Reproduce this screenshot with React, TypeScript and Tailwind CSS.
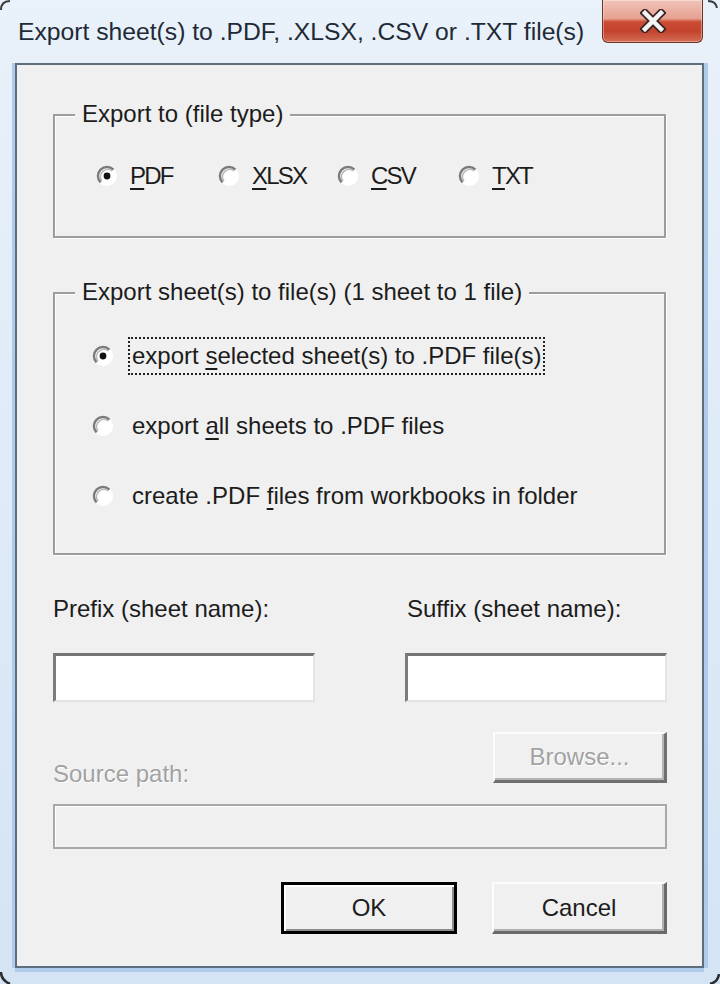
import React from "react"

function RadioDot({ checked }: { checked?: boolean }) {
    return (
        <svg width="22" height="22" viewBox="0 0 22 22" className="shrink-0">
            <circle cx="11" cy="11" r="9" fill="#ffffff" />
            <path d="M17.4 4.6 A9 9 0 0 1 4.6 17.4" fill="none" stroke="#ffffff" strokeWidth="2" />
            <path d="M4.6 17.4 A9 9 0 0 1 17.4 4.6" fill="none" stroke="#7a7a7a" strokeWidth="2.4" />
            <path d="M5.9 16.1 A7.3 7.3 0 0 1 16.1 5.9" fill="none" stroke="#b8b8b8" strokeWidth="1.6" />
            {checked && <circle cx="11" cy="11" r="3.4" fill="#111111" />}
        </svg>
    )
}

function Key({ children }: { children: React.ReactNode }) {
    return <span className="underline decoration-[2px] underline-offset-[4px]">{children}</span>
}

function CloseButton() {
    return (
        <div className="mr-[17px] flex h-[43px] w-[101px] items-center justify-center rounded-b-[6px] border border-t-0 border-[#6e3327] bg-[linear-gradient(180deg,#f1c4b8_0%,#e6a191_44%,#cb4b34_52%,#c3432d_74%,#d66d55_100%)] shadow-[inset_0_0_0_1px_rgba(255,255,255,0.35)]">
            <svg width="26" height="24" viewBox="0 0 26 24">
                <path d="M5 4 L21 20 M21 4 L5 20" stroke="#3b2624" strokeWidth="8" strokeLinecap="square" />
                <path d="M5 4 L21 20 M21 4 L5 20" stroke="#f4f4f4" strokeWidth="4.5" strokeLinecap="square" />
            </svg>
        </div>
    )
}

function GroupBox({ title, className, children }: { title: string; className?: string; children: React.ReactNode }) {
    return (
        <div className={"w-[613px] border-2 border-[#9c9c9c] shadow-[inset_1px_1px_0_#ffffff,1px_1px_0_#ffffff] " + (className ?? "")}>
            <div className="-mt-[16px] ml-[20px] w-fit bg-[#f0f0f0] px-[7px]">{title}</div>
            {children}
        </div>
    )
}

function OptionRow({ checked, focused, children }: { checked?: boolean; focused?: boolean; children: React.ReactNode }) {
    return (
        <div className="flex h-[40px] items-center">
            <RadioDot checked={checked} />
            <span className={"ml-[14px] border-2 px-[2px] py-[3px] " + (focused ? "border-dotted border-[#222222]" : "border-transparent")}>
                {children}
            </span>
        </div>
    )
}

function TextBox() {
    return (
        <div className="h-[49px] border-t-[3px] border-l-[3px] border-b-2 border-r-2 border-t-[#747474] border-l-[#7c7c7c] border-b-[#e4e4e4] border-r-[#e4e4e4] bg-white" />
    )
}

export default function App() {
    const fileTypes = [
        { key: "P", rest: "DF", width: "w-[122px]", checked: true },
        { key: "X", rest: "LSX", width: "w-[119px]" },
        { key: "C", rest: "SV", width: "w-[121px]" },
        { key: "T", rest: "XT", width: "w-[100px]" },
    ]

    return (
        <div className="relative flex h-[984px] w-[720px] flex-col overflow-hidden bg-linear-to-b from-[#e9f1fa] to-[#d4e4f5] font-['Liberation_Sans',Arial,sans-serif] text-[24px] leading-[28px] text-[#1c1c1c]">
            {/* window corners */}
            <svg className="absolute left-0 top-0" width="10" height="10" viewBox="0 0 10 10">
                <path d="M1 10 Q1 1 10 1" fill="none" stroke="#3a3a3a" strokeWidth="2" />
            </svg>
            <svg className="absolute right-0 top-0" width="12" height="8" viewBox="0 0 12 8">
                <path d="M0 1 Q8 1 9 8" fill="none" stroke="#3a3a3a" strokeWidth="2" />
            </svg>
            <svg className="absolute bottom-0 left-0" width="12" height="12" viewBox="0 0 12 12">
                <path d="M1 0 Q1 8 10 12" fill="none" stroke="#2c2c2c" strokeWidth="2.5" />
            </svg>
            <svg className="absolute bottom-0 right-0" width="12" height="10" viewBox="0 0 12 10">
                <path d="M11 0 Q10 8 2 10" fill="none" stroke="#2c2c2c" strokeWidth="2.5" />
            </svg>

            {/* Title bar */}
            <div className="flex h-[63px] shrink-0 items-start justify-between">
                <div className="pl-[18px] pt-[18px] text-[24.7px] text-[#1e2a36]">Export sheet(s) to .PDF, .XLSX, .CSV or .TXT file(s)</div>
                <CloseButton />
            </div>

            {/* Client area */}
            <div className="mb-[16px] ml-[15px] mr-[16px] flex-1 border-2 border-[#5e6e7e] bg-[#f0f0f0] pl-[36px] shadow-[-3px_0_0_#aecbec,4px_0_0_#aecbec,0_4px_0_#aecbec]">
                <GroupBox title="Export to (file type)" className="mt-[49px]">
                    <div className="mb-[46px] mt-[34px] flex pl-[41px]">
                        {fileTypes.map((t) => (
                            <div key={t.key} className={"flex items-center " + t.width}>
                                <RadioDot checked={t.checked} />
                                <span className="ml-[12px] tracking-[-1.8px]"><Key>{t.key}</Key>{t.rest}</span>
                            </div>
                        ))}
                    </div>
                </GroupBox>

                <GroupBox title="Export sheet(s) to file(s) (1 sheet to 1 file)" className="mt-[54px]">
                    <div className="mb-[37px] mt-[30px] flex flex-col gap-[30px] pl-[37px]">
                        <OptionRow checked focused>export <Key>s</Key>elected sheet(s) to .PDF file(s)</OptionRow>
                        <OptionRow>export <Key>a</Key>ll sheets to .PDF files</OptionRow>
                        <OptionRow>create .PDF <Key>f</Key>iles from workbooks in folder</OptionRow>
                    </div>
                </GroupBox>

                <div className="mt-[40px] w-[614px]">
                    <div className="flex justify-between">
                        <div className="w-[262px]">
                            <div>Prefix (sheet name):</div>
                            <div className="mt-[30px]"><TextBox /></div>
                        </div>
                        <div className="w-[262px]">
                            <div className="pl-[2px]">Suffix (sheet name):</div>
                            <div className="mt-[30px]"><TextBox /></div>
                        </div>
                    </div>

                    <div className="mt-[30px] flex items-start justify-between">
                        <div className="mt-[28px] text-[#a2a2a2] [text-shadow:1px_1px_0_#ffffff]">Source path:</div>
                        <div className="flex h-[51px] w-[174px] items-center justify-center border-l-2 border-t-2 border-b-[3px] border-r-[3px] border-l-[#fcfcfc] border-t-[#fcfcfc] border-b-[#707070] border-r-[#707070] bg-[#f0f0f0] text-[#a2a2a2] shadow-[inset_-2px_-2px_0_#b4b4b4] [text-shadow:1px_1px_0_#ffffff]">
                            Browse...
                        </div>
                    </div>

                    <div className="mt-[16px] h-[45px] border-2 border-[#a8a8a8] bg-[#f0f0f0] shadow-[inset_1px_1px_0_#ffffff]" />

                    <div className="mt-[33px] flex justify-end gap-[35px]">
                        <div className="flex h-[52px] w-[176px] items-center justify-center border-[3px] border-black bg-[#f0f0f0] shadow-[inset_2px_2px_0_#ffffff,inset_-2px_-2px_0_#8c8c8c]">
                            OK
                        </div>
                        <div className="flex h-[52px] w-[175px] items-center justify-center border-l-2 border-t-2 border-b-[3px] border-r-[3px] border-l-[#fcfcfc] border-t-[#fcfcfc] border-b-[#6a6a6a] border-r-[#6a6a6a] bg-[#f0f0f0] shadow-[inset_-2px_-2px_0_#b0b0b0]">
                            Cancel
                        </div>
                    </div>
                </div>
            </div>
        </div>
    )
}
